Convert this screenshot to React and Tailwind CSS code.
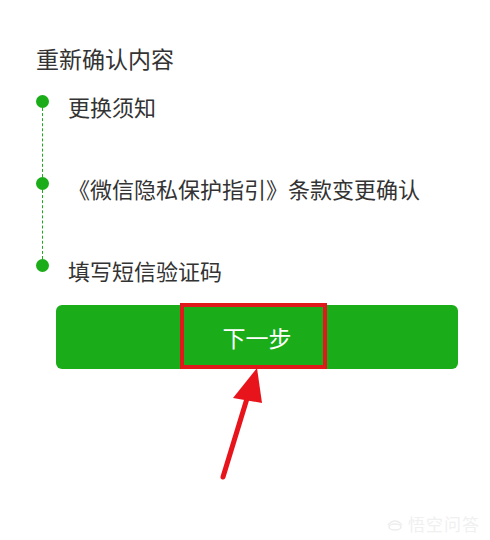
import React from 'react';

const FONT = { fontFamily: '"Noto Sans CJK SC", "Noto Sans", sans-serif' };

const STEPS = ['更换须知', '《微信隐私保护指引》条款变更确认', '填写短信验证码'];

const Step = ({ label, last }) => (
  <div className="flex">
    <div className="flex w-[13px] flex-col items-center">
      <span className="h-[13px] w-[13px] shrink-0 rounded-full bg-[#1aad19]" />
      {!last && <span className="h-[69px] border-l border-dashed border-[#1aad19]" />}
    </div>
    <p className="ml-[19px] mt-[-1px] text-[22px] leading-[24px] text-[#333333]">{label}</p>
  </div>
);

export default function App() {
  return (
    <div className="relative h-[540px] w-[490px] overflow-hidden bg-white" style={FONT}>
      <div className="pl-[36px] pt-[44px]">
        <h1 className="text-[23px] leading-[28px] text-[#333333]">重新确认内容</h1>
        <div className="mt-[23px]">
          {STEPS.map((s, i) => (
            <Step key={s} label={s} last={i === STEPS.length - 1} />
          ))}
        </div>
      </div>

      <div className="relative ml-[56px] mt-[23px] w-[402px]">
        <button className="flex h-[64px] w-full items-center justify-center rounded-[6px] bg-[#1aad19] text-[23px] text-white">
          下一步
        </button>
        {/* red highlight box */}
        <span className="pointer-events-none absolute left-[124px] top-[-2px] h-[66px] w-[147px] border-[4px] border-[#e0181c]" />
      </div>

      {/* annotation arrow */}
      <svg className="pointer-events-none absolute left-0 top-0" width="490" height="540" viewBox="0 0 490 540">
        <line x1="223" y1="477" x2="249" y2="392" stroke="#e8141b" strokeWidth="5" strokeLinecap="round" />
        <polygon points="257,368 233,398 262,403" fill="#e8141b" />
      </svg>

      {/* watermark */}
      <div className="absolute bottom-[6px] right-[10px] flex items-center gap-[4px] text-[#f0f0f0]">
        <svg width="18" height="16" viewBox="0 0 18 16" fill="none" stroke="#ededed" strokeWidth="1.6">
          <path d="M2 9 Q9 1 16 9" />
          <ellipse cx="9" cy="11" rx="6" ry="3" />
        </svg>
        <span className="text-[17px] leading-[20px] tracking-[1px]">悟空问答</span>
      </div>
    </div>
  );
}
